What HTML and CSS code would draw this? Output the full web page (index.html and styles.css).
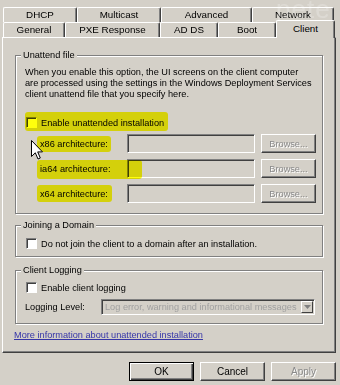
FILE: index.html
```html
<!DOCTYPE html>
<html>
<head>
<meta charset="utf-8">
<link rel="stylesheet" href="styles.css">
</head>
<body>
<div class="dialog">
  <div class="tab-row back">
    <div class="tab t-dhcp">DHCP</div>
    <div class="tab t-multicast">Multicast</div>
    <div class="tab t-advanced">Advanced</div>
    <div class="tab t-network">Network</div>
  </div>
  <div class="tab-row front">
    <div class="tab t-general">General</div>
    <div class="tab t-pxe">PXE Response</div>
    <div class="tab t-adds">AD DS</div>
    <div class="tab t-boot">Boot</div>
    <div class="tab t-client selected">Client</div>
  </div>
  <div class="panel">
    <div class="group g-unattend">
      <span class="group-title">Unattend file</span>
      <p class="desc">When you enable this option, the UI screens on the client computer<br>are processed using the settings in the Windows Deployment Services<br>client unattend file that you specify here.</p>
      <div class="check c-unattend"><span class="box"></span><span>Enable unattended installation</span></div>
      <div class="arch"><span class="arch-label">x86 architecture:</span><span class="textbox"></span><span class="btn disabled browse">Browse...</span></div>
      <div class="arch"><span class="arch-label">ia64 architecture:</span><span class="textbox"></span><span class="btn disabled browse">Browse...</span></div>
      <div class="arch"><span class="arch-label">x64 architecture:</span><span class="textbox"></span><span class="btn disabled browse">Browse...</span></div>
    </div>
    <div class="group g-domain">
      <span class="group-title">Joining a Domain</span>
      <div class="check c-domain"><span class="box"></span><span>Do not join the client to a domain after an installation.</span></div>
    </div>
    <div class="group g-logging">
      <span class="group-title">Client Logging</span>
      <div class="check c-logging"><span class="box"></span><span>Enable client logging</span></div>
      <div class="level-row">
        <span class="level-label">Logging Level:</span>
        <div class="select">
          <span class="select-text">Log error, warning and informational messages</span>
          <span class="select-arrow"><svg width="7" height="4" viewBox="0 0 7 4"><path d="M0 0h7L3.5 4z" fill="#808080"/></svg></span>
        </div>
      </div>
    </div>
    <a class="link" href="#">More information about unattended installation</a>
  </div>
  <div class="buttons">
    <span class="btn default">OK</span>
    <span class="btn">Cancel</span>
    <span class="btn disabled">Apply</span>
  </div>

  <span class="watermark">pete</span>
  <span class="hl hl-1"></span>
  <span class="hl hl-2"></span>
  <span class="hl hl-3"></span>
  <span class="hl hl-4"></span>
  <svg class="cursor" width="12" height="20" viewBox="0 0 12 20"><path d="M0.5 0.5V16.5L4.3 12.8L7 19L9.3 18L6.7 11.9H11.5Z" fill="#fff" stroke="#000" stroke-width="1" stroke-linejoin="miter"/></svg>
</div>
</body>
</html>
```
FILE: styles.css
```css
* { box-sizing: border-box; }
body {
  margin: 0;
  background: #d4d0c8;
  font-family: "Liberation Sans", Arial, sans-serif;
  font-size: 9.2px;
  color: #000;
}
.dialog {
  position: relative;
  width: 340px;
  height: 385px;
  padding: 7px 4px 0 2px;
  overflow: hidden;
}
.tab-row { display: flex; height: 15px; }
.back { margin-left: 1px; }
.front { margin-left: 1px; }
.tab {
  height: 15px;
  border-top: 1px solid #fff;
  border-left: 1px solid #fff;
  border-right: 1px solid #404040;
  box-shadow: inset -1px 0 #808080;
  border-radius: 2px 2px 0 0;
  display: flex;
  align-items: center;
  justify-content: center;
  background: #d4d0c8;
  line-height: 12px;
  font-size: 9.8px;
}
.t-dhcp { width: 74px; }
.t-multicast { width: 84px; }
.t-advanced { width: 91px; }
.t-network { width: 82px; }
.t-general { width: 62px; }
.t-pxe { width: 95px; }
.t-adds { width: 58px; }
.t-boot { width: 58px; }
.t-client { width: 59px; }
.selected {
  height: 18px;
  margin-top: -2px;
  position: relative;
  z-index: 1;
  align-items: flex-start;
  padding-top: 2px;
}
.panel {
  width: 334px;
  height: 316px;
  border-top: 1px solid #fff;
  border-left: 1px solid #fff;
  border-right: 1px solid #404040;
  border-bottom: 1px solid #404040;
  box-shadow: inset -1px -1px #808080;
  padding-top: 17px;
}
.group {
  margin-left: 12px;
  width: 308px;
  border: 1px solid #808080;
  box-shadow: inset 1px 1px #fff, 1px 1px #fff;
}
.group-title {
  display: block;
  width: max-content;
  margin: -7px 0 0 5px;
  padding: 0 2px;
  background: #d4d0c8;
  line-height: 13px;
}
.desc {
  margin: 5px 0 0 9px;
  line-height: 11px;
  white-space: nowrap;
}
.check {
  display: flex;
  align-items: center;
  gap: 4px;
  height: 13px;
  margin-left: 10px;
}
.box {
  width: 11px;
  height: 11px;
  background: #fff;
  border: 1px solid;
  border-color: #808080 #fff #fff #808080;
  box-shadow: inset 1px 1px #404040;
}
.c-unattend { margin-top: 16px; }
.g-unattend { padding-bottom: 10px; }
.arch {
  display: flex;
  align-items: center;
  height: 19px;
  margin: 6px 0 0 24px;
}
.c-unattend + .arch { margin-top: 5px; }
.arch-label { width: 87px; }
.textbox {
  width: 128px;
  height: 19px;
  border: 1px solid;
  border-color: #808080 #fff #fff #808080;
  box-shadow: inset 1px 1px #404040;
}
.btn {
  display: flex;
  align-items: center;
  justify-content: center;
  height: 19px;
  border: 1px solid;
  border-color: #fff #404040 #404040 #fff;
  box-shadow: inset -1px -1px #808080;
}
.browse { width: 55px; margin-left: 6px; }
.disabled { color: #8a8a8a; text-shadow: 1px 1px #fff; }
.g-domain { margin-top: 11px; padding-bottom: 6px; }
.c-domain { margin-top: 5px; }
.g-logging { margin-top: 13px; padding-bottom: 8px; }
.c-logging { margin-top: 4px; }
.level-row {
  display: flex;
  align-items: center;
  height: 16px;
  margin: 5px 0 0 9px;
}
.level-label { width: 76px; }
.select {
  width: 214px;
  height: 16px;
  display: flex;
  align-items: center;
  border: 1px solid;
  border-color: #808080 #fff #fff #808080;
  box-shadow: inset 1px 1px #404040;
  padding: 1px 1px 1px 3px;
}
.select-text { flex: 1; color: #a0a0a0; white-space: nowrap; overflow: hidden; }
.select-arrow {
  width: 12px;
  height: 12px;
  display: flex;
  align-items: center;
  justify-content: center;
  border: 1px solid;
  border-color: #fff #404040 #404040 #fff;
}
.link {
  display: block;
  width: max-content;
  margin: 5px 0 0 11px;
  line-height: 13px;
  color: #3535a8;
  text-decoration: underline;
}
.buttons {
  display: flex;
  justify-content: flex-end;
  gap: 6px;
  margin-top: 9px;
}
.buttons .btn { width: 65px; font-size: 10px; }
.default {
  border: 1px solid #000;
  box-shadow: inset 1px 1px #fff, inset -1px -1px #404040, inset -2px -2px #808080;
}
.watermark {
  position: absolute;
  left: 276px;
  top: -6px;
  font-size: 26px;
  line-height: 30px;
  color: #fff;
  opacity: 0.22;
  letter-spacing: 1px;
}
.hl {
  position: absolute;
  background: #ffff00;
  mix-blend-mode: multiply;
  border-radius: 3px;
  opacity: 0.95;
}
.hl-1 { left: 25px; top: 112px; width: 143px; height: 19px; }
.hl-2 { left: 37px; top: 136px; width: 74px; height: 16px; }
.hl-3 { left: 37px; top: 160px; width: 105px; height: 19px; }
.hl-4 { left: 37px; top: 185px; width: 75px; height: 17px; }
.cursor { position: absolute; left: 31px; top: 140px; }
```
